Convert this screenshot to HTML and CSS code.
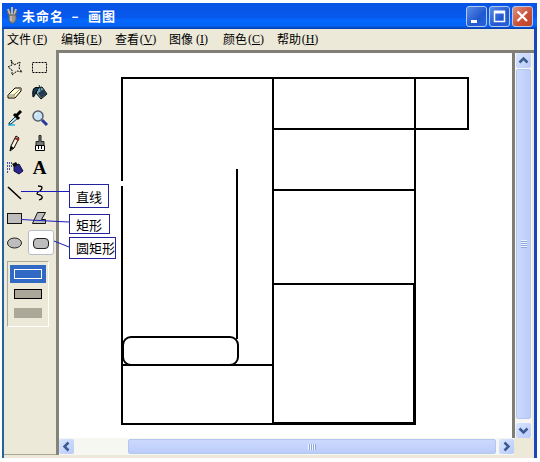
FILE: index.html
```html
<!DOCTYPE html>
<html lang="zh-CN">
<head>
<meta charset="utf-8">
<title>未命名 - 画图</title>
<link rel="stylesheet" href="styles.css">
</head>
<body>
<div class="window">
  <header class="titlebar">
    <svg class="app-icon" width="13" height="20" viewBox="0 0 13 20"><path d="M2 3l2 6M6 1v8M10 3L8 9" stroke="#c8b994" stroke-width="2"/><path d="M1 5l2 5M11 5l-2 5" stroke="#6d625c"/><path d="M3 9h7v5l-2 3H5l-2-3z" fill="#9f9890" stroke="#59606c"/><path d="M5 10v5" stroke="#ddd4bc"/></svg>
    <h1 class="title"><span>未命名</span><span class="dash">-</span><span>画图</span></h1>
    <div class="controls">
      <span class="control"><svg width="21" height="21"><path d="M5 15.500h6" stroke="#fff" stroke-width="3"/></svg></span>
      <span class="control"><svg width="21" height="21"><path d="M5 6h11" stroke="#fff" stroke-width="3"/><path d="M5.500 5v10.500h10V5" fill="none" stroke="#fff" stroke-width="1.500"/></svg></span>
      <span class="control close"><svg width="21" height="21"><path d="M5.500 5.500l9.500 9.500M15 5.500l-9.500 9.500" stroke="#fff" stroke-width="2.200"/></svg></span>
    </div>
  </header>
  <nav class="menu">
    <span class="item">文件<span class="key">(<u>F</u>)</span></span>
    <span class="item">编辑<span class="key">(<u>E</u>)</span></span>
    <span class="item">查看<span class="key">(<u>V</u>)</span></span>
    <span class="item">图像<span class="key">(<u>I</u>)</span></span>
    <span class="item">颜色<span class="key">(<u>C</u>)</span></span>
    <span class="item">帮助<span class="key">(<u>H</u>)</span></span>
  </nav>
  <div class="body">
    <aside class="toolbox">
      <div class="tools">
        <span class="tool"><svg width="18" height="18" viewBox="0 0 18 18"><path d="M5 1l3 5 6-3-1 6 3 4-5-1-5 4v-5L2 8l4-2z" fill="none" stroke="#000" stroke-dasharray="2 1"/></svg></span>
        <span class="tool"><svg width="18" height="18" viewBox="0 0 18 18"><rect x="1.500" y="3.500" width="14" height="10" fill="none" stroke="#000" stroke-dasharray="2 1"/></svg></span>
        <span class="tool"><svg width="18" height="18" viewBox="0 0 18 18"><path d="M2 11l7-7h6v3l-6 7H2z" fill="#fffbd0" stroke="#000"/><path d="M2 11h6l7-7M8 11v3" fill="none" stroke="#8a8676"/><path d="M3 12.500h5" stroke="#d2bd82"/></svg></span>
        <span class="tool"><svg width="18" height="18" viewBox="0 0 18 18"><path d="M6 4l5-1 5 7-6 5-5-6z" fill="#76a9be" stroke="#000"/><path d="M7 9l6-4 3 5-6 4z" fill="#263d50"/><path d="M8 1l3 8" stroke="#17394c"/><path d="M8 4C3 2 1 5 2 13c2 0 2-5 5-7" fill="#17394c" stroke="#000"/></svg></span>
        <span class="tool"><svg width="18" height="18" viewBox="0 0 18 18"><path d="M2 16h7" stroke="#55c2e1" stroke-width="2"/><path d="M3 14l7-7 2 2-7 6H3z" fill="#bdeeff" stroke="#182f3b"/><path d="M8 5l5 5M10 7l5-5" stroke="#000" stroke-width="3"/></svg></span>
        <span class="tool"><svg width="18" height="18" viewBox="0 0 18 18"><circle cx="7" cy="7" r="5" fill="#c8e3f3" stroke="#59606f" stroke-width="1.500"/><path d="M11 11l5 5" stroke="#253c9e" stroke-width="3"/><path d="M4 6l2-2" stroke="#fff"/></svg></span>
        <span class="tool"><svg width="18" height="18" viewBox="0 0 18 18"><path d="M5 12l5-10 3 2-5 10-4 3z" fill="#fff4df" stroke="#000"/><path d="M9 4l4 2" stroke="#922c20" stroke-width="2"/><path d="M4 16l1-4 3 2z"/></svg></span>
        <span class="tool"><svg width="18" height="18" viewBox="0 0 18 18"><path d="M8 1.500h2v6h3v4H5v-4h3z" fill="#777" stroke="#222"/><path d="M4.500 11.500h9v5h-9z" fill="#fff" stroke="#000"/><path d="M7.500 12v3M10.500 12v3" stroke="#000"/></svg></span>
        <span class="tool"><svg width="18" height="18" viewBox="0 0 18 18"><path d="M8 7l5-2 4 7-4 3-5-3z" fill="#29268e" stroke="#10103d"/><path d="M6 5l4-2 2 3-4 2z" fill="#111"/><path d="M1 4h5M1 7h5M1 10h3M1 13h2" stroke="#3d54a8" stroke-width="2" stroke-dasharray="1 1"/></svg></span>
        <span class="tool letter">A</span>
        <span class="tool"><svg width="18" height="18" viewBox="0 0 18 18"><path d="M2 3l13 12" stroke="#000" stroke-width="1.600"/></svg></span>
        <span class="tool"><svg width="18" height="18" viewBox="0 0 18 18"><path d="M7 2c5 0 5 2 2 5-4 2-4 3 0 4 4 2 2 4-1 5" fill="none" stroke="#000" stroke-width="1.300"/></svg></span>
        <span class="tool"><svg width="18" height="18" viewBox="0 0 18 18"><rect x="1.500" y="4.500" width="14" height="10" fill="#bdbdbd" stroke="#111"/></svg></span>
        <span class="tool"><svg width="18" height="18" viewBox="0 0 18 18"><path d="M6.500 3.500h8l-4 7h4v4h-13z" fill="#bdbdbd" stroke="#111"/></svg></span>
        <span class="tool"><svg width="18" height="18" viewBox="0 0 18 18"><ellipse cx="8.500" cy="9" rx="7" ry="5" fill="#bdbdbd" stroke="#222"/></svg></span>
        <span class="tool selected"><svg width="18" height="18" viewBox="0 0 18 18"><rect x="1.500" y="4.500" width="15" height="10" rx="3.500" fill="#bdbdbd" stroke="#222"/></svg></span>
      </div>
      <div class="options">
        <span class="option active"><i class="swatch outline"></i></span>
        <span class="option"><i class="swatch filled"></i></span>
        <span class="option"><i class="swatch solid"></i></span>
      </div>
    </aside>
    <main class="workspace">
      <svg class="drawing" width="453" height="385" viewBox="59 53 453 385">
        <g fill="none" stroke="#000" stroke-width="2">
          <path d="M122 181V78H468V129H273M273 77V424M415 77V424M122 186V424H416M122 365H273M273 190H415M273 284H415"/>
          <path d="M237 169V339"/>
          <rect x="123" y="337" width="115" height="28" rx="8"/>
          <path d="M273 423H415M414 284V423"/>
        </g>
      </svg>
      <div class="vscroll">
        <span class="arrow"><svg width="15" height="15"><path d="M3.500 9.500l4-4 4 4" fill="none" stroke="#3d5b91" stroke-width="2.500"/></svg></span>
        <span class="thumb vertical"><i class="grip"></i></span>
        <span class="arrow"><svg width="15" height="15"><path d="M3.500 5.500l4 4 4-4" fill="none" stroke="#3d5b91" stroke-width="2.500"/></svg></span>
      </div>
      <div class="hscroll">
        <span class="arrow"><svg width="15" height="15"><path d="M9.500 3.500l-4 4 4 4" fill="none" stroke="#3d5b91" stroke-width="2.500"/></svg></span>
        <span class="track"></span>
        <span class="thumb horizontal"><i class="grip sideways"></i></span>
        <span class="arrow"><svg width="15" height="15"><path d="M5.500 3.500l4 4-4 4" fill="none" stroke="#3d5b91" stroke-width="2.500"/></svg></span>
      </div>
    </main>
  </div>
</div>
<svg class="leaders" width="60" height="75" viewBox="15 185 60 75"><path d="M21 191.500h49M21 219.500l37 2 11 .5M54 241l15 6" fill="none" stroke="#1b1bc0"/></svg>
<span class="callout line">直线</span>
<span class="callout rectangle">矩形</span>
<span class="callout rounded">圆矩形</span>
</body>
</html>
```

FILE: styles.css
```css
* { box-sizing: border-box; }
body {
  margin: 0;
  padding: 3px 3px 0 2px;
  width: 540px;
  height: 462px;
  overflow: hidden;
  background: #fff;
  color: #000;
  font: 12px "Noto Sans CJK SC", sans-serif;
}
.window {
  width: 535px;
  height: 455px;
  border-left: 2px solid #24639f;
  border-right: 3px solid #1547bd;
  background: #ece9d8;
}
.titlebar {
  display: flex;
  align-items: center;
  height: 26px;
  margin: 0 -3px 0 -2px;
  padding: 0 4px 0 4px;
  background: linear-gradient(#0754e4, #0758ed 55%, #0568ff 65%, #0563f7 88%, #063ba7);
}
.app-icon { flex: none; }
.title {
  display: flex;
  margin: 0 0 0 3px;
  color: #fff;
  font-size: 13px;
  font-weight: 700;
  line-height: 24px;
  letter-spacing: 1px;
}
.dash { width: 24px; text-align: center; transform: scaleX(1.6); }
.controls { display: flex; gap: 2px; margin-left: auto; }
.control {
  width: 21px;
  height: 21px;
  border: 1px solid #b5c8ed;
  border-radius: 3px;
  background: linear-gradient(135deg, #598de9, #2158cf 60%, #2863dc);
}
.control svg { display: block; margin: -1px; }
.close { background: linear-gradient(135deg, #dc9180, #c94e34 60%, #b9442b); }
.menu {
  display: flex;
  gap: 12px;
  height: 21px;
  padding-left: 3px;
  line-height: 20px;
}
.item { display: flex; width: 42px; white-space: nowrap; }
.key { width: 18px; text-align: center; font: 12px/20px "Liberation Serif", serif; }
.key u { text-underline-offset: 1px; }
.body { display: grid; grid-template-columns: 52px 478px; height: 407px; }
.toolbox {
  padding-top: 5px;
  height: 405px;
  border-bottom: 1px solid #aaa795;
}
.tools { display: grid; grid-template-columns: 25px 25px; grid-auto-rows: 25px; margin-left: -2px; }
.tool { display: flex; align-items: center; justify-content: center; }
.tool svg { flex: none; display: block; }
.letter { font: bold 19px/25px "Liberation Serif", serif; }
.selected {
  width: 26px;
  height: 25px;
  margin-left: 1px;
  border: 1px solid #b4bdcb;
  border-radius: 3px;
  background: #fff;
}
.options {
  display: flex;
  flex-direction: column;
  width: 42px;
  height: 66px;
  margin: 6px 0 0 3px;
  padding: 3px 2px;
  border: 1px solid #fff;
  border-top-color: #aca899;
  border-left-color: #aca899;
}
.option { display: flex; align-items: center; justify-content: center; height: 20px; }
.active { height: 18px; margin-bottom: 1px; background: #316ac5; }
.swatch { width: 28px; height: 10px; }
.outline { border: 1px solid #fff; }
.filled { border: 1px solid #000; background: #aca899; }
.solid { background: #aca899; }
.workspace {
  display: grid;
  grid-template-columns: 453px 20px;
  grid-template-rows: 385px 17px;
  height: 405px;
  border-top: 3px solid #807e76;
  border-left: 3px solid #858278;
}
.drawing { display: block; background: #fff; }
.vscroll {
  display: flex;
  flex-direction: column;
  align-items: center;
  gap: 1px;
  height: 385px;
  padding: 0 1px;
  border-left: 3px solid #807e76;
  background: #f7f7f2;
}
.arrow {
  flex: none;
  width: 15px;
  height: 15px;
  border-radius: 2px;
  background: linear-gradient(135deg, #dae5ff, #b7cafa);
}
.arrow svg { display: block; }
.thumb {
  display: flex;
  align-items: center;
  justify-content: center;
  border: 1px solid #b5c7ee;
  border-radius: 2px;
}
.vertical { width: 15px; flex: 1; margin-bottom: 3px; background: linear-gradient(90deg, #ccd9ff, #bacdf8); }
.grip { width: 6px; height: 8px; background: repeating-linear-gradient(#eff5ff 0 1px, #8fa7db 1px 2px); }
.hscroll {
  display: flex;
  align-items: center;
  gap: 1px;
  width: 455px;
  height: 17px;
  background: #f7f7f2;
}
.track { width: 52px; }
.horizontal { flex: 1; height: 15px; margin-right: 2px; background: linear-gradient(#ccd9ff, #bacdf8); }
.sideways { width: 8px; height: 6px; background: repeating-linear-gradient(90deg, #eff5ff 0 1px, #8fa7db 1px 2px); }
.leaders { position: absolute; left: 15px; top: 185px; }
.callout {
  position: absolute;
  left: 69px;
  border: 1px solid #2522a0;
  background: #fff;
  padding-left: 6px;
  font-size: 13px;
  white-space: nowrap;
}
.line { top: 184px; width: 40px; height: 24px; line-height: 24px; }
.rectangle { top: 214px; width: 41px; height: 20px; line-height: 19px; }
.rounded { top: 237px; width: 47px; height: 22px; line-height: 19px; }
```
